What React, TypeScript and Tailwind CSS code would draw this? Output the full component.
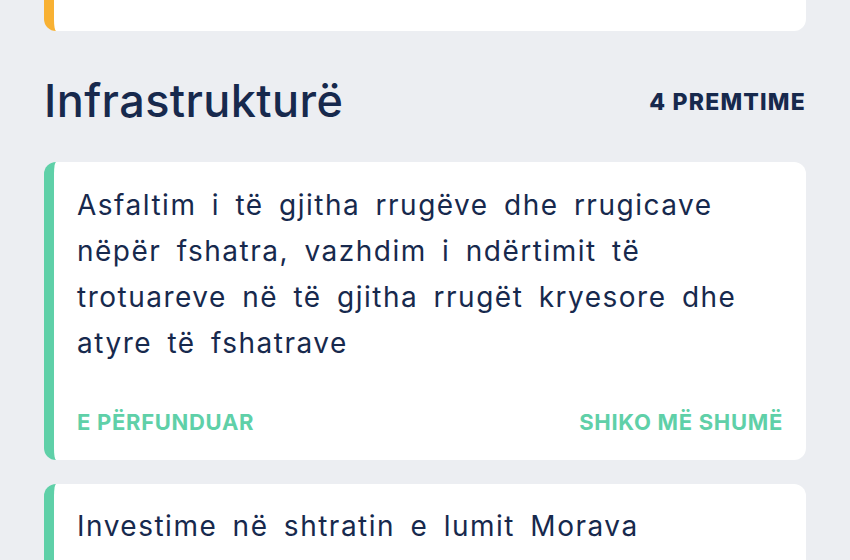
export default function App() {
  const font = { fontFamily: 'Inter, "Noto Sans", sans-serif' };
  const body = "text-[28px] leading-[46px] text-[#17294d] tracking-[1.5px] [word-spacing:6px] whitespace-nowrap";
  const status = "flex justify-between items-center h-[22px] text-[22px] leading-none font-bold tracking-[0.7px]";
  return (
    <div className="w-[850px] h-[560px] overflow-hidden bg-[#eceef2]" style={font}>
      <div className="px-[44px]">
        <div className="-mt-[21px] rounded-[12px] bg-white border-l-[10px] border-[#f8b133] pl-[23px] pr-[23px] pb-[30px]">
          <div className={status + " text-[#f8b133]"}>
            <span>NË PROCES</span>
            <span>SHIKO MË SHUMË</span>
          </div>
        </div>
        <div className="flex items-center justify-between h-[131px] pt-[8px]">
          <h2 className="text-[45px] font-medium text-[#17294d] tracking-[0.4px] leading-none">Infrastrukturë</h2>
          <span className="mt-[4px] text-[23px] leading-none font-extrabold tracking-[1.2px] text-[#17294d]">4 PREMTIME</span>
        </div>
        <div className="rounded-[12px] bg-white border-l-[10px] border-[#5fd0a8] pl-[23px] pr-[23px] pt-[20px] pb-[27px]">
          <p className={body}>
            Asfaltim i të gjitha rrugëve dhe rrugicave
            <br />
            nëpër fshatra, vazhdim i ndërtimit të
            <br />
            trotuareve në të gjitha rrugët kryesore dhe
            <br />
            atyre të fshatrave
          </p>
          <div className={status + " mt-[45px] text-[#5fd0a8]"}>
            <span>E PËRFUNDUAR</span>
            <span>SHIKO MË SHUMË</span>
          </div>
        </div>
        <div className="mt-[24px] rounded-[12px] bg-white border-l-[10px] border-[#5fd0a8] pl-[23px] pr-[23px] pt-[19px] pb-[30px]">
          <p className={body}>Investime në shtratin e lumit Morava</p>
        </div>
      </div>
    </div>
  );
}
